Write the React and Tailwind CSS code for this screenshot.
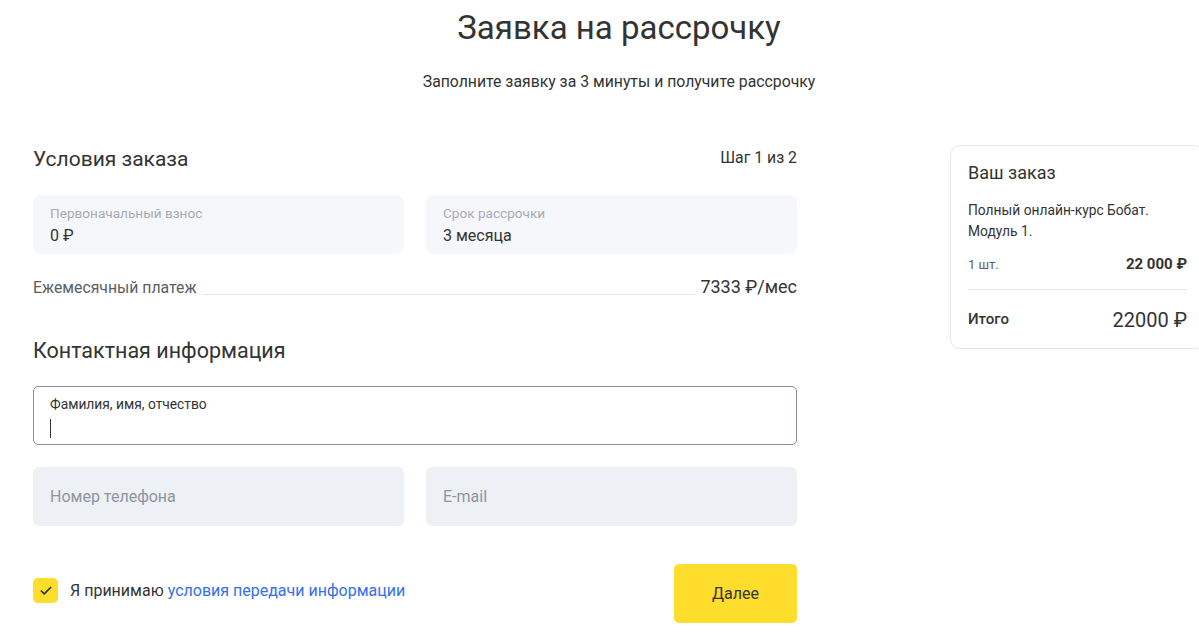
import { Check } from 'lucide-react'

const font = { fontFamily: 'Roboto, "Noto Sans", sans-serif' }

function Field({ label, value }) {
  return (
    <div className="h-[59px] rounded-[8px] bg-[#f6f7fb] px-[17px] pt-[9px]">
      <p className="text-[13.6px] leading-[18px] text-[#a7abb3]">{label}</p>
      <p className="mt-[4px] text-[16px] leading-[20px] text-[#333]">{value}</p>
    </div>
  )
}

function Placeholder({ text }) {
  return (
    <div className="h-[59px] rounded-[6px] bg-[#edf0f5] px-[17px] flex items-center">
      <span className="text-[16px] text-[#8e95a0]">{text}</span>
    </div>
  )
}

export default function App() {
  return (
    <div className="w-full h-[639px] overflow-hidden bg-white text-[#333]" style={font}>
      <div className="w-[1172px] pl-[33px] box-content">
        {/* ── Header ── */}
        <h1 className="pt-[6px] text-center text-[33px] leading-[44px] font-normal text-[#333]">
          Заявка на рассрочку
        </h1>
        <p className="mt-[22px] text-center text-[15.8px] leading-[20px] text-[#333]">
          Заполните заявку за 3 минуты и получите рассрочку
        </p>

        <div className="mt-[53px] flex items-start">
          {/* ── Form ── */}
          <div className="w-[764px] shrink-0">
            <div className="flex items-center justify-between">
              <h2 className="text-[21px] leading-[28px] text-[#333]">Условия заказа</h2>
              <span className="text-[15.8px] text-[#333] -mt-[2px]">Шаг 1 из 2</span>
            </div>

            <div className="mt-[22px] grid grid-cols-2 gap-[22px]">
              <Field label="Первоначальный взнос" value="0 ₽" />
              <Field label="Срок рассрочки" value="3 месяца" />
            </div>

            <div className="mt-[22px] flex items-end gap-[5px]">
              <span className="text-[15.8px] leading-[20px] text-[#5a5e66]">Ежемесячный платеж</span>
              <div className="flex-1 mb-[3px] border-b border-[#e4e6ea]" />
              <span className="text-[18px] leading-[22px] text-[#333]">7333 ₽/мес</span>
            </div>

            <h2 className="mt-[39px] text-[21.5px] leading-[28px] text-[#333]">
              Контактная информация
            </h2>

            <div className="mt-[21px] h-[59px] rounded-[5px] border border-[#8a8e96] bg-white px-[16px] pt-[8px]">
              <p className="text-[13.8px] leading-[18px] text-[#333]">Фамилия, имя, отчество</p>
              <div className="mt-[6px] h-[19px] w-px bg-[#333]" />
            </div>

            <div className="mt-[22px] grid grid-cols-2 gap-[22px]">
              <Placeholder text="Номер телефона" />
              <Placeholder text="E-mail" />
            </div>

            <div className="mt-[38px] flex items-center justify-between">
              <label className="flex items-center gap-[12px] -mt-[6px]">
                <span className="w-[25px] h-[25px] rounded-[5px] bg-[#ffdd2d] flex items-center justify-center">
                  <Check size={14} strokeWidth={3} className="text-[#333]" />
                </span>
                <span className="text-[16px] text-[#333]">
                  Я принимаю{' '}
                  <a className="text-[#336fee]">условия передачи информации</a>
                </span>
              </label>
              <button className="w-[123px] h-[59px] rounded-[5px] bg-[#ffdd2d] text-[16px] text-[#333]">
                Далее
              </button>
            </div>
          </div>

          {/* ── Order card ── */}
          <div className="ml-[153px] mt-0 w-[255px] shrink-0 rounded-[10px] border border-[#e5e7eb] px-[17px] pt-[14px] pb-[13px]">
            <h3 className="text-[18px] leading-[26px] text-[#333]">Ваш заказ</h3>
            <p className="mt-[14px] text-[13.8px] leading-[21px] text-[#333]">
              Полный онлайн-курс Бобат.<br />Модуль 1.
            </p>
            <div className="mt-[11px] flex items-center justify-between">
              <span className="text-[13px] text-[#5a5e66]">1 шт.</span>
              <span className="text-[15px] font-bold text-[#333]">22 000 ₽</span>
            </div>
            <div className="mt-[13px] border-t border-[#e5e7eb]" />
            <div className="mt-[15px] flex items-center justify-between">
              <span className="text-[15px] font-medium text-[#333]">Итого</span>
              <span className="text-[20px] text-[#333]">22000 ₽</span>
            </div>
          </div>
        </div>
      </div>
    </div>
  )
}
